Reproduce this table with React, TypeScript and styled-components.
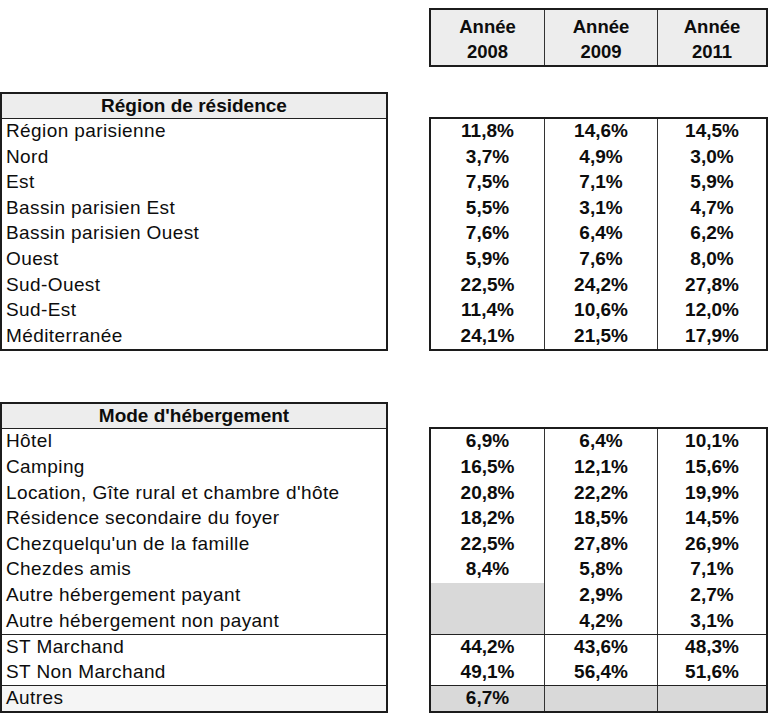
import React from "react";
import styled, { createGlobalStyle } from "styled-components";

type Row = {
  label: string;
  values: (string | null)[];
  sep?: boolean;
  shade?: boolean;
};

const years = ["2008", "2009", "2011"];

const regions: Row[] = [
  { label: "Région parisienne", values: ["11,8%", "14,6%", "14,5%"] },
  { label: "Nord", values: ["3,7%", "4,9%", "3,0%"] },
  { label: "Est", values: ["7,5%", "7,1%", "5,9%"] },
  { label: "Bassin parisien Est", values: ["5,5%", "3,1%", "4,7%"] },
  { label: "Bassin parisien Ouest", values: ["7,6%", "6,4%", "6,2%"] },
  { label: "Ouest", values: ["5,9%", "7,6%", "8,0%"] },
  { label: "Sud-Ouest", values: ["22,5%", "24,2%", "27,8%"] },
  { label: "Sud-Est", values: ["11,4%", "10,6%", "12,0%"] },
  { label: "Méditerranée", values: ["24,1%", "21,5%", "17,9%"] },
];

const modes: Row[] = [
  { label: "Hôtel", values: ["6,9%", "6,4%", "10,1%"] },
  { label: "Camping", values: ["16,5%", "12,1%", "15,6%"] },
  { label: "Location, Gîte rural et chambre d'hôte", values: ["20,8%", "22,2%", "19,9%"] },
  { label: "Résidence secondaire du foyer", values: ["18,2%", "18,5%", "14,5%"] },
  { label: "Chezquelqu'un de la famille", values: ["22,5%", "27,8%", "26,9%"] },
  { label: "Chezdes amis", values: ["8,4%", "5,8%", "7,1%"] },
  { label: "Autre hébergement payant", values: [null, "2,9%", "2,7%"] },
  { label: "Autre hébergement non payant", values: [null, "4,2%", "3,1%"] },
  { label: "ST Marchand", values: ["44,2%", "43,6%", "48,3%"], sep: true },
  { label: "ST Non Marchand", values: ["49,1%", "56,4%", "51,6%"] },
  { label: "Autres", values: ["6,7%", null, null], sep: true, shade: true },
];

const ROW_H = 25.6;

const GlobalStyle = createGlobalStyle`
  body {
    margin: 0;
    background: #fff;
    color: #0d0d0d;
    font-family: "Liberation Sans", Arial, sans-serif;
  }
`;

const Page = styled.div`
  width: 770px;
  padding-top: 8px;
`;

const YearBar = styled.div`
  display: flex;
  justify-content: flex-end;
  padding-right: 2px;
`;

const ValueBox = styled.div<{ $top?: number }>`
  width: 339px;
  box-sizing: border-box;
  border: 2px solid #1c1c1c;
  margin-top: ${(p) => p.$top ?? 0}px;
  align-self: flex-start;
`;

const YearGrid = styled.div`
  display: grid;
  grid-template-columns: 113px 113px 1fr;
`;

const YearCell = styled.div<{ $first?: boolean }>`
  background: #ededed;
  border-left: ${(p) => (p.$first ? "none" : "1px solid #333")};
  text-align: center;
  font-size: 18.5px;
  font-weight: bold;
  line-height: 25px;
  padding: 4px 0 1px;
`;

const Section = styled.div<{ $top: number }>`
  display: flex;
  justify-content: space-between;
  align-items: flex-start;
  margin-top: ${(p) => p.$top}px;
  padding-right: 2px;
`;

const LabelTable = styled.div`
  width: 388px;
  box-sizing: border-box;
  border: 2px solid #1c1c1c;
`;

const LabelHeader = styled.div`
  height: 25px;
  box-sizing: border-box;
  background: #ededed;
  border-bottom: 1px solid #222;
  text-align: center;
  font-size: 19px;
  font-weight: bold;
  line-height: 24px;
`;

const LabelRow = styled.div<{ $sep?: boolean; $shade?: boolean }>`
  height: ${ROW_H}px;
  box-sizing: border-box;
  border-top: ${(p) => (p.$sep ? "1px solid #222" : "none")};
  background: ${(p) => (p.$shade ? "#f5f5f5" : "#fff")};
  padding-left: 4px;
  font-size: 19px;
  letter-spacing: 0.4px;
  line-height: ${ROW_H - 1}px;
  white-space: nowrap;
`;

const ValueRow = styled.div<{ $sep?: boolean }>`
  display: grid;
  grid-template-columns: 113px 113px 1fr;
  height: ${ROW_H}px;
  box-sizing: border-box;
  border-top: ${(p) => (p.$sep ? "1px solid #222" : "none")};
`;

const ValueCell = styled.div<{ $first?: boolean; $empty?: boolean }>`
  border-left: ${(p) => (p.$first ? "none" : "1px solid #333")};
  background: ${(p) => (p.$empty ? "#d9d9d9" : "transparent")};
  text-align: center;
  font-size: 19px;
  font-weight: bold;
  line-height: ${ROW_H - 1}px;
`;

function DataSection({ title, rows, top }: { title: string; rows: Row[]; top: number }) {
  return (
    <Section $top={top}>
      <LabelTable>
        <LabelHeader>{title}</LabelHeader>
        {rows.map((r) => (
          <LabelRow key={r.label} $sep={r.sep} $shade={r.shade}>
            {r.label}
          </LabelRow>
        ))}
      </LabelTable>
      <ValueBox $top={25}>
        {rows.map((r) => (
          <ValueRow key={r.label} $sep={r.sep}>
            {r.values.map((v, i) => (
              <ValueCell key={i} $first={i === 0} $empty={v === null || (r.shade ?? false)}>
                {v}
              </ValueCell>
            ))}
          </ValueRow>
        ))}
      </ValueBox>
    </Section>
  );
}

export default function App() {
  return (
    <Page>
      <GlobalStyle />
      <YearBar>
        <ValueBox>
          <YearGrid>
            {years.map((y, i) => (
              <YearCell key={y} $first={i === 0}>
                Année
                <br />
                {y}
              </YearCell>
            ))}
          </YearGrid>
        </ValueBox>
      </YearBar>
      <DataSection title="Région de résidence" rows={regions} top={25} />
      <DataSection title="Mode d'hébergement" rows={modes} top={51} />
    </Page>
  );
}
